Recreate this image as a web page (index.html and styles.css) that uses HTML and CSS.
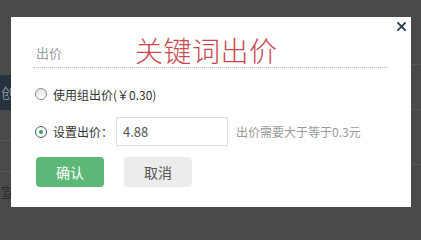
FILE: index.html
```html
<!DOCTYPE html>
<html lang="zh-CN">
<head>
<meta charset="utf-8">
<title>关键词出价</title>
<link rel="stylesheet" href="styles.css">
</head>
<body>
<div class="page">
  <div class="side">
    <div class="side-top"></div>
    <div class="side-nav"><span>创</span></div>
    <div class="side-row"></div>
    <div class="side-row"></div>
    <div class="side-text"><span>宣</span></div>
  </div>
  <div class="col">
    <div class="dialog">
      <a class="close" href="#" aria-label="关闭">
        <svg width="9" height="9" viewBox="0 0 9 9"><path d="M1 1L8 8M8 1L1 8" stroke="#2c3e50" stroke-width="1.8" stroke-linecap="square"/></svg>
      </a>
      <div class="head">
        <span class="label">出价</span>
        <span class="title">关键词出价</span>
      </div>
      <div class="opt opt-first">
        <span class="radio"></span>
        <span class="opt-text">使用组出价(￥0.30)</span>
      </div>
      <div class="opt opt-second">
        <span class="radio checked"></span>
        <span class="opt-text">设置出价：</span>
        <input class="price" type="text" value="4.88">
        <span class="hint">出价需要大于等于0.3元</span>
      </div>
      <div class="actions">
        <button class="btn btn-ok">确认</button>
        <button class="btn btn-cancel">取消</button>
      </div>
    </div>
  </div>
  <div class="rside">
    <div class="rline r1"></div>
    <div class="rline r2"></div>
    <div class="rline r3"></div>
  </div>
</div>
</body>
</html>
```
FILE: styles.css
```css
* { box-sizing: border-box; }
html, body {
  margin: 0;
  padding: 0;
  background: #4a4a4a;
  font-family: "Noto Sans CJK SC", "Noto Sans", sans-serif;
}
.page {
  display: flex;
  width: 421px;
  height: 218px;
  overflow: hidden;
}
.side {
  width: 11px;
  flex: none;
  display: flex;
  flex-direction: column;
  overflow: hidden;
}
.side-top { height: 75px; }
.side-nav {
  height: 35px;
  background: #28323f;
  color: #8a929c;
  font-size: 14px;
  line-height: 35px;
  display: flex;
  justify-content: flex-end;
}
.side-nav span { margin-right: -4px; }
.side-row {
  height: 31px;
  border-bottom: 1px solid #555555;
}
.side-text {
  margin-top: 10px;
  font-size: 13px;
  color: #2a2a2a;
  display: flex;
  justify-content: flex-end;
}
.side-text span { margin-right: -3px; }
.col {
  width: 400px;
  flex: none;
  padding-top: 17px;
}
.rside {
  flex: 1;
  display: flex;
  flex-direction: column;
}
.rline { border-bottom: 1px solid #555555; }
.r1 { height: 65px; }
.r2 { height: 45px; }
.r3 { height: 55px; }
.dialog {
  position: relative;
  height: 190px;
  background: #ffffff;
  padding: 0 24px 0 22px;
}
.close {
  position: absolute;
  top: 5px;
  right: 5px;
  width: 9px;
  height: 9px;
  display: block;
  line-height: 0;
}
.head {
  height: 51px;
  padding-top: 15px;
  display: flex;
  align-items: center;
  border-bottom: 1px dotted #b8b8b8;
}
.label {
  margin-left: 3px;
  margin-top: 5px;
  font-size: 13px;
  color: #9a9a9a;
}
.title {
  margin-left: 73px;
  font-size: 28px;
  line-height: 34px;
  letter-spacing: 0.5px;
  color: #c8484e;
  font-weight: 300;
}
.opt {
  display: flex;
  align-items: center;
  font-size: 12px;
  color: #333333;
}
.opt-first {
  margin-top: 16px;
  height: 20px;
}
.opt-second {
  margin-top: 13px;
  height: 29px;
}
.radio {
  width: 12px;
  height: 12px;
  margin-left: 2px;
  margin-right: 6px;
  border: 1px solid #8a8a8a;
  border-radius: 50%;
  background: linear-gradient(#e6e6e6, #ffffff);
  display: flex;
  align-items: center;
  justify-content: center;
}
.radio.checked { border-color: #4a5a6a; background: #ffffff; }
.radio.checked::after {
  content: "";
  width: 4px;
  height: 4px;
  border-radius: 50%;
  background: #3aa65a;
}
.price {
  width: 112px;
  height: 29px;
  margin: 0 0 0 3px;
  padding: 0 6px;
  border: 1px solid #e0e0e0;
  font: inherit;
  font-size: 13px;
  color: #555555;
  outline: none;
}
.hint {
  margin-left: 8px;
  font-size: 12px;
  color: #9a9a9a;
}
.actions {
  margin-top: 11px;
  display: flex;
  gap: 20px;
  padding-left: 3px;
}
.btn {
  width: 68px;
  height: 30px;
  border: none;
  border-radius: 4px;
  font-family: inherit;
  font-size: 14px;
  padding: 0;
}
.btn-ok { background: #5cb878; color: #ffffff; }
.btn-cancel { background: #ececec; color: #555555; }
```
